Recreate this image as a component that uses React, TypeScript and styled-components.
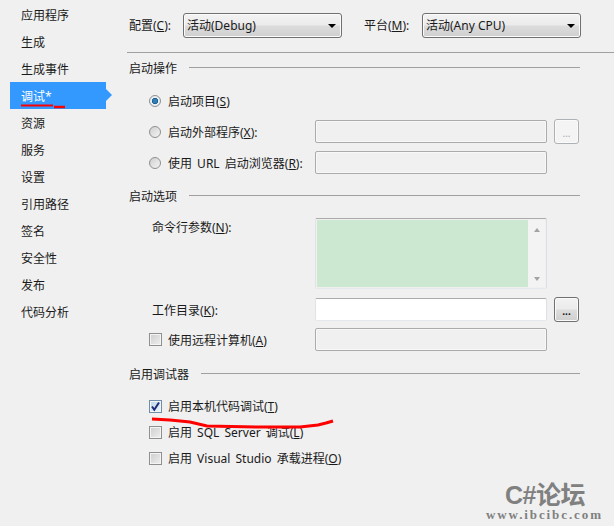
import React from "react";
import styled, { createGlobalStyle } from "styled-components";

const Global = createGlobalStyle`
  html, body { margin: 0; padding: 0; background: #f0f0f0; }
  body { width: 614px; height: 526px; overflow: hidden; }
`;

const FONT = `"Noto Sans", "Noto Sans CJK SC", sans-serif`;

const Page = styled.div`
  position: relative;
  width: 614px;
  height: 526px;
  display: flex;
  background: #f0f0f0;
  color: #1a1a1a;
  font: 12px/16px ${FONT};
  overflow: hidden;
`;

const Sidebar = styled.nav`
  width: 127px;
  flex: none;
  padding: 1px 0 0 10px;
  box-sizing: border-box;
`;

const NavItem = styled.div<{ $active?: boolean }>`
  position: relative;
  width: 96px;
  height: 27px;
  padding: 3px 0 0 11px;
  box-sizing: border-box;
  display: flex;
  align-items: center;
  background: ${(p) => (p.$active ? "#3399ff" : "transparent")};
  color: ${(p) => (p.$active ? "#fff" : "#1a1a1a")};
  ${(p) =>
    p.$active &&
    `&::after {
      content: "";
      position: absolute;
      left: 96px;
      top: 7px;
      border-left: 6px solid #3399ff;
      border-top: 6px solid transparent;
      border-bottom: 6px solid transparent;
    }`}
`;

const Main = styled.main`
  width: 487px;
  flex: none;
  padding-top: 13px;
  box-sizing: border-box;
`;

const TopBar = styled.div`
  display: flex;
  align-items: center;
  height: 25px;
  padding-left: 2px;
`;

const TopLabel = styled.label<{ $w: number }>`
  width: ${(p) => p.$w}px;
  flex: none;
`;

const Select = styled.div<{ $mr?: number }>`
  position: relative;
  width: 159px;
  height: 25px;
  box-sizing: border-box;
  flex: none;
  margin-right: ${(p) => p.$mr ?? 0}px;
  padding-left: 3px;
  border: 1px solid #707070;
  border-radius: 3px;
  display: flex;
  align-items: center;
  box-shadow: inset 0 0 0 1px #fbfbfb;
  background: linear-gradient(#f3f3f3 0%, #ebebeb 48%, #dcdcdc 52%, #cfcfcf 100%);
  &::after {
    content: "";
    position: absolute;
    right: 5px;
    top: 10px;
    border-top: 4px solid #000;
    border-left: 4px solid transparent;
    border-right: 4px solid transparent;
  }
`;

const Divider = styled.hr`
  margin: 14px 0 0;
  border: 0;
  height: 1px;
  background: #a0a0a0;
`;

const SectionHeader = styled.div<{ $mt: number }>`
  display: flex;
  align-items: center;
  gap: 12px;
  width: 451px;
  height: 16px;
  margin: ${(p) => p.$mt}px 0 0 2px;
  &::after {
    content: "";
    flex: 1;
    height: 1px;
    background: #a0a0a0;
  }
`;

const SectionTitle = styled.span`
  padding-top: 4px;
`;

const Row = styled.div<{ $h: number; $mt?: number }>`
  display: grid;
  grid-template-columns: 181px 232px 25px;
  column-gap: 7px;
  align-items: center;
  height: ${(p) => p.$h}px;
  margin-top: ${(p) => p.$mt ?? 0}px;
`;

const OptionLabel = styled.label`
  display: flex;
  align-items: center;
  gap: 7px;
  padding-left: 22px;
  white-space: nowrap;
`;

const OptionText = styled.span`
  padding-top: 2px;
  word-spacing: 2px;
`;

const FieldLabel = styled.label<{ $top?: boolean }>`
  padding-left: 25px;
  padding-top: ${(p) => (p.$top ? 1 : 2)}px;
  align-self: ${(p) => (p.$top ? "start" : "center")};
  margin-top: ${(p) => (p.$top ? 1 : 0)}px;
`;

const Radio = styled.span<{ $on?: boolean }>`
  width: 12px;
  height: 12px;
  flex: none;
  box-sizing: border-box;
  border-radius: 50%;
  border: 1px solid #8e8f8f;
  background: ${(p) =>
    p.$on
      ? "radial-gradient(circle, #2f7fb4 0 2.2px, #0d4f80 2.8px, #e8eef2 3.4px)"
      : "linear-gradient(135deg, #cfcfcf, #f4f4f4)"};
`;

const Check = styled.span<{ $on?: boolean }>`
  width: 13px;
  height: 13px;
  margin-right: -1px;
  flex: none;
  box-sizing: border-box;
  display: inline-flex;
  align-items: center;
  justify-content: center;
  border: 1px solid ${(p) => (p.$on ? "#6f8fa8" : "#8e8f8f")};
  box-shadow: inset 0 0 0 1px #f4f4f4;
  background: ${(p) =>
    p.$on ? "linear-gradient(135deg, #bcd5e8, #eef6fb)" : "linear-gradient(135deg, #cdcdcd, #efefef)"};
`;

const Input = styled.div<{ $enabled?: boolean }>`
  grid-column: 2;
  height: 23px;
  box-sizing: border-box;
  border: 1px solid #ababab;
  border-bottom-color: ${(p) => (p.$enabled ? "#e3e9ef" : "#ababab")};
  border-left-color: ${(p) => (p.$enabled ? "#e2e3ea" : "#ababab")};
  border-right-color: ${(p) => (p.$enabled ? "#dbdfe6" : "#ababab")};
  border-radius: 2px;
  box-shadow: ${(p) => (p.$enabled ? "none" : "inset 0 0 0 1px #f8f8f8")};
  background: ${(p) => (p.$enabled ? "#fff" : "#f0f0f0")};
`;

const MoreButton = styled.button<{ $enabled?: boolean }>`
  width: 25px;
  height: 25px;
  padding: 3px 0 0;
  box-sizing: border-box;
  font: 700 10px/14px ${FONT};
  color: ${(p) => (p.$enabled ? "#111" : "#a8a8a8")};
  font-weight: ${(p) => (p.$enabled ? 700 : 400)};
  border: 1px solid ${(p) => (p.$enabled ? "#707070" : "#adb2b5")};
  border-radius: 3px;
  box-shadow: inset 0 0 0 1px #fafafa;
  background: ${(p) =>
    p.$enabled
      ? "linear-gradient(#f2f2f2 0%, #ebebeb 48%, #dddddd 52%, #cfcfcf 100%)"
      : "#f4f4f4"};
`;

const MultiLine = styled.div`
  grid-column: 2;
  height: 71px;
  box-sizing: border-box;
  align-self: start;
  display: flex;
  border: 1px solid #ababab;
  border-bottom-color: #e3e9ef;
  border-left-color: #e2e3ea;
  border-right-color: #dbdfe6;
  border-radius: 2px;
  padding: 1px;
`;

const GreenArea = styled.div`
  flex: 1;
  background: #cde8d0;
`;

const ScrollBar = styled.div`
  width: 17px;
  flex: none;
  display: flex;
  flex-direction: column;
  align-items: center;
  justify-content: space-between;
  padding: 8px 0 6px;
  box-sizing: border-box;
  background: #f3f3f3;
`;

const ScrollArrow = styled.span<{ $up?: boolean }>`
  border-left: 3.5px solid transparent;
  border-right: 3.5px solid transparent;
  ${(p) => (p.$up ? "border-bottom" : "border-top")}: 4px solid #a3a3a3;
`;

const Mn = styled.span`
  text-decoration: underline;
  text-underline-offset: 1px;
`;

const Mark = styled.svg`
  position: absolute;
  left: 0;
  top: 0;
  pointer-events: none;
`;

const Watermark = styled.div`
  position: absolute;
  left: 486px;
  top: 482px;
  width: 126px;
  color: #808080;
`;

const WatermarkTitle = styled.div`
  padding-left: 19px;
  font: 700 25px/26px "Liberation Sans", "Noto Sans CJK SC", sans-serif;
  letter-spacing: -0.5px;
  white-space: nowrap;
`;

const WatermarkUrl = styled.div`
  font: 700 13px/13px "Liberation Serif", serif;
  letter-spacing: 1.9px;
  white-space: nowrap;
`;

const navItems = ["应用程序", "生成", "生成事件", "调试*", "资源", "服务", "设置", "引用路径", "签名", "安全性", "发布", "代码分析"];

export default function App() {
  return (
    <Page>
      <Global />
      <Sidebar>
        {navItems.map((n) => (
          <NavItem key={n} $active={n === "调试*"}>{n}</NavItem>
        ))}
      </Sidebar>
      <Main>
        <TopBar>
          <TopLabel $w={54}>配置(<Mn>C</Mn>):</TopLabel>
          <Select $mr={22}>活动(Debug)</Select>
          <TopLabel $w={58}>平台(<Mn>M</Mn>):</TopLabel>
          <Select>活动(Any CPU)</Select>
        </TopBar>
        <Divider />
        <SectionHeader $mt={6}><SectionTitle>启动操作</SectionTitle></SectionHeader>
        <Row $h={31} $mt={10}>
          <OptionLabel><Radio $on /><OptionText>启动项目(<Mn>S</Mn>)</OptionText></OptionLabel>
        </Row>
        <Row $h={31}>
          <OptionLabel><Radio /><OptionText>启动外部程序(<Mn>X</Mn>):</OptionText></OptionLabel>
          <Input />
          <MoreButton $enabled={false}>...</MoreButton>
        </Row>
        <Row $h={31}>
          <OptionLabel><Radio /><OptionText>使用 URL 启动浏览器(<Mn>R</Mn>):</OptionText></OptionLabel>
          <Input />
        </Row>
        <SectionHeader $mt={9}><SectionTitle>启动选项</SectionTitle></SectionHeader>
        <Row $h={71} $mt={15}>
          <FieldLabel $top>命令行参数(<Mn>N</Mn>):</FieldLabel>
          <MultiLine>
            <GreenArea />
            <ScrollBar>
              <ScrollArrow $up />
              <ScrollArrow />
            </ScrollBar>
          </MultiLine>
        </Row>
        <Row $h={23} $mt={8}>
          <FieldLabel>工作目录(<Mn>K</Mn>):</FieldLabel>
          <Input $enabled />
          <MoreButton $enabled>...</MoreButton>
        </Row>
        <Row $h={23} $mt={8}>
          <OptionLabel><Check /><OptionText>使用远程计算机(<Mn>A</Mn>)</OptionText></OptionLabel>
          <Input />
        </Row>
        <SectionHeader $mt={14}><SectionTitle>启用调试器</SectionTitle></SectionHeader>
        <Row $h={26} $mt={12}>
          <OptionLabel>
            <Check $on>
              <svg width="11" height="11" viewBox="0 0 11 11">
                <path d="M2 5.5 L4.3 8.8 L9 1.5" fill="none" stroke="#1c2b78" strokeWidth="2" />
              </svg>
            </Check>
            <OptionText>启用本机代码调试(<Mn>T</Mn>)</OptionText>
          </OptionLabel>
        </Row>
        <Row $h={26}>
          <OptionLabel><Check /><OptionText>启用 SQL Server 调试(<Mn>L</Mn>)</OptionText></OptionLabel>
        </Row>
        <Row $h={26}>
          <OptionLabel><Check /><OptionText>启用 Visual Studio 承载进程(<Mn>O</Mn>)</OptionText></OptionLabel>
        </Row>
      </Main>
      <Mark width="614" height="526" viewBox="0 0 614 526">
        <path d="M21 105.5 L53 105.5" stroke="#f00" strokeWidth="2" fill="none" />
        <path d="M54 107 L65 107" stroke="#f00" strokeWidth="2.5" fill="none" />
        <path
          d="M152 419 L170 420 L190 422 L207 426 L260 427 L300 427 L318 425 L326 423 L333 421"
          stroke="#f00"
          strokeWidth="3"
          fill="none"
        />
      </Mark>
      <Watermark>
        <WatermarkTitle>C#论坛</WatermarkTitle>
        <WatermarkUrl>www.ibcibc.com</WatermarkUrl>
      </Watermark>
    </Page>
  );
}
